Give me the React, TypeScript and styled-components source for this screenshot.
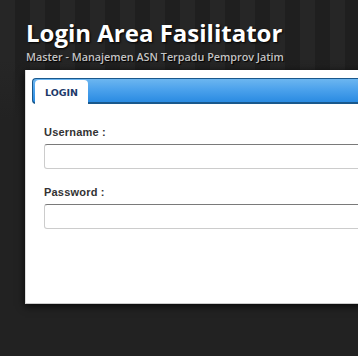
import styled, { createGlobalStyle } from "styled-components";

const GlobalStyle = createGlobalStyle`
  html, body {
    margin: 0;
    padding: 0;
    background: #222;
  }
`;

const Page = styled.div`
  width: 358px;
  height: 356px;
  overflow: hidden;
  background:
    linear-gradient(to bottom, rgba(34, 34, 34, 0) 0px, rgba(34, 34, 34, 0) 60px, #222 120px),
    repeating-linear-gradient(90deg, #262626 0px, #262626 15px, #1f1f1f 15px, #1f1f1f 30px);
  padding: 16px 0 0 25px;
  box-sizing: border-box;
`;

const Title = styled.h1`
  margin: 0 0 0 1px;
  font-family: "Open Sans", "DejaVu Sans", sans-serif;
  font-weight: 700;
  font-size: 24px;
  line-height: 33px;
  color: #fff;
  text-shadow: 1px 1px 2px #000;
  white-space: nowrap;
`;

const Subtitle = styled.div`
  margin: 0 0 0 1px;
  font-family: "Open Sans", "DejaVu Sans", sans-serif;
  font-weight: 600;
  font-size: 10.8px;
  line-height: 15px;
  color: #c4c4c4;
  text-shadow: 1px 1px 1px #000;
  white-space: nowrap;
`;

const Card = styled.div`
  margin-top: 6px;
  width: 420px;
  height: 234px;
  background: #fff;
  border-left: 1px solid #ddd;
  border-bottom: 1px solid #ccc;
  box-shadow: 0 2px 8px rgba(0, 0, 0, 0.8);
  padding: 8px 0 0 6px;
  box-sizing: border-box;
`;

const TabBar = styled.div`
  display: flex;
  align-items: flex-end;
  height: 23px;
  padding-left: 2px;
  border: 1px solid #19588c;
  border-bottom-width: 2px;
  border-right: none;
  border-radius: 4px 0 0 4px;
  background: linear-gradient(to bottom, #6cb6f0 0%, #4ca2ec 45%, #2a8be2 100%);
`;

const Tab = styled.div<{ $active?: boolean }>`
  height: 24px;
  width: 53px;
  margin-bottom: -2px;
  background: ${(p) => (p.$active ? "#fff" : "transparent")};
  border-radius: 4px 4px 0 0;
  display: flex;
  align-items: center;
  justify-content: center;
  font-family: "DejaVu Sans", sans-serif;
  font-weight: 700;
  font-size: 9.5px;
  color: #1d3a6a;
  padding-top: 1px;
  box-sizing: border-box;
`;

const Form = styled.form`
  display: flex;
  flex-direction: column;
  padding: 22px 0 0 12px;
`;

const Label = styled.label`
  font-family: "Liberation Sans", Arial, sans-serif;
  font-weight: 700;
  font-size: 11px;
  line-height: 13px;
  letter-spacing: 0.2px;
  color: #333;
  margin-bottom: 5px;
`;

const Input = styled.input`
  width: 380px;
  height: 25px;
  box-sizing: border-box;
  border: 1px solid #ccc;
  border-top-color: #7a7a7a;
  border-radius: 3px;
  background: #fff;
  margin-bottom: 17px;
  outline: none;
`;

export default function App() {
  return (
    <>
      <GlobalStyle />
      <Page>
        <Title>Login Area Fasilitator</Title>
        <Subtitle>Master - Manajemen ASN Terpadu Pemprov Jatim</Subtitle>
        <Card>
          <TabBar>
            <Tab $active>LOGIN</Tab>
          </TabBar>
          <Form>
            <Label>Username :</Label>
            <Input type="text" />
            <Label>Password :</Label>
            <Input type="password" />
          </Form>
        </Card>
      </Page>
    </>
  );
}
